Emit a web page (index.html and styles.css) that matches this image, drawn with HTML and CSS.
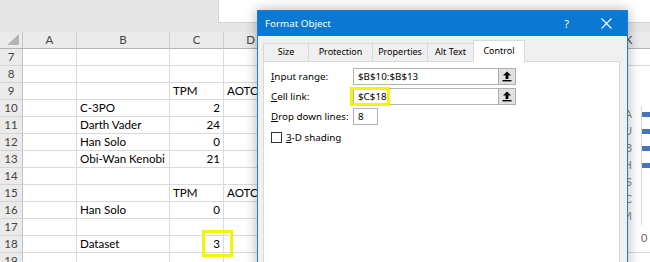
FILE: index.html
```html
<!DOCTYPE html>
<html lang="en">
<head>
    <meta charset="UTF-8">
    <title>Format Object</title>
    <link rel="stylesheet" href="styles.css">
</head>
<body>
    <div class="toolbar">
        <div class="spacer"></div>
        <div class="formula"></div>
    </div>

    <div class="sheet">
        <div class="row heads"><div class="corner"></div><div>A</div><div>B</div><div>C</div><div>D</div><div>E</div><div>F</div><div>G</div><div>H</div><div>I</div><div>J</div><div>K</div></div>
        <div class="row"><div class="rh">7</div><div></div><div></div><div></div><div></div><div></div><div></div><div></div><div></div><div></div><div></div><div></div></div>
        <div class="row"><div class="rh">8</div><div></div><div></div><div></div><div></div><div></div><div></div><div></div><div></div><div></div><div></div><div></div></div>
        <div class="row"><div class="rh">9</div><div></div><div></div><div>TPM</div><div>AOTC</div><div></div><div></div><div></div><div></div><div></div><div></div><div></div></div>
        <div class="row"><div class="rh">10</div><div></div><div>C-3PO</div><div class="num">2</div><div></div><div></div><div></div><div></div><div></div><div></div><div></div><div></div></div>
        <div class="row"><div class="rh">11</div><div></div><div>Darth Vader</div><div class="num">24</div><div></div><div></div><div></div><div></div><div></div><div></div><div></div><div></div></div>
        <div class="row"><div class="rh">12</div><div></div><div>Han Solo</div><div class="num">0</div><div></div><div></div><div></div><div></div><div></div><div></div><div></div><div></div></div>
        <div class="row"><div class="rh">13</div><div></div><div>Obi-Wan Kenobi</div><div class="num">21</div><div></div><div></div><div></div><div></div><div></div><div></div><div></div><div></div></div>
        <div class="row"><div class="rh">14</div><div></div><div></div><div></div><div></div><div></div><div></div><div></div><div></div><div></div><div></div><div></div></div>
        <div class="row"><div class="rh">15</div><div></div><div></div><div>TPM</div><div>AOTC</div><div></div><div></div><div></div><div></div><div></div><div></div><div></div></div>
        <div class="row"><div class="rh">16</div><div></div><div>Han Solo</div><div class="num">0</div><div></div><div></div><div></div><div></div><div></div><div></div><div></div><div></div></div>
        <div class="row"><div class="rh">17</div><div></div><div></div><div></div><div></div><div></div><div></div><div></div><div></div><div></div><div></div><div></div></div>
        <div class="row"><div class="rh">18</div><div></div><div>Dataset</div><div class="num">3</div><div></div><div></div><div></div><div></div><div></div><div></div><div></div><div></div></div>
        <div class="row"><div class="rh">19</div><div></div><div></div><div></div><div></div><div></div><div></div><div></div><div></div><div></div><div></div><div></div></div>

        <!-- highlight round the linked cell -->
        <div class="mark cell-mark"></div>

        <!-- the bar chart sitting on the sheet, mostly behind the dialog -->
        <div class="chart">
            <div class="bars">
                <div class="bar-row"><span class="cat">A</span><span class="bar"></span></div>
                <div class="bar-row"><span class="cat">U</span><span class="bar"></span></div>
                <div class="bar-row"><span class="cat">B</span><span class="bar"></span></div>
                <div class="bar-row"><span class="cat">H</span><span class="bar"></span></div>
                <div class="bar-row"><span class="cat">S</span></div>
                <div class="bar-row"><span class="cat">C</span></div>
                <div class="bar-row"><span class="cat">M</span></div>
            </div>
            <div class="axis-label">0</div>
        </div>
    </div>

    <div class="dialog">
        <div class="titlebar">
            <span class="title">Format Object</span>
            <span class="help">?</span>
            <span class="close">
                <svg width="11" height="11" viewBox="0 0 11 11"><path d="M0.5 0.5 L10.5 10.5 M10.5 0.5 L0.5 10.5" stroke="#fff" stroke-width="1.1" fill="none"/></svg>
            </span>
        </div>
        <div class="dlg-body">
            <div class="tabs">
                <div class="tab" style="width: 46px;">Size</div>
                <div class="tab" style="width: 65px;">Protection</div>
                <div class="tab" style="width: 56px;">Properties</div>
                <div class="tab" style="width: 47px;">Alt Text</div>
                <div class="tab active" style="width: 52px;">Control</div>
            </div>
            <div class="panel">
                <div class="field">
                    <span class="form-label"><u>I</u>nput range:</span>
                    <span class="form-input wide">$B$10:$B$13</span>
                    <span class="pick">
                        <svg width="10" height="11" viewBox="0 0 10 11"><path d="M5 0.5 L1 4.5 H3.6 V8 H6.4 V4.5 H9 Z" fill="#000"/><rect x="0.5" y="9" width="9" height="1.4" fill="#000"/></svg>
                    </span>
                </div>
                <div class="field">
                    <span class="form-label"><u>C</u>ell link:</span>
                    <span class="form-input wide">$C$18</span>
                    <span class="pick">
                        <svg width="10" height="11" viewBox="0 0 10 11"><path d="M5 0.5 L1 4.5 H3.6 V8 H6.4 V4.5 H9 Z" fill="#000"/><rect x="0.5" y="9" width="9" height="1.4" fill="#000"/></svg>
                    </span>
                </div>
                <div class="field">
                    <span class="form-label"><u>D</u>rop down lines:</span>
                    <span class="form-input short">8</span>
                </div>
                <div class="check">
                    <span class="box"></span>
                    <span><u>3</u>-D shading</span>
                </div>
                <div class="mark link-mark"></div>
            </div>
        </div>
    </div>
</body>
</html>
```

FILE: styles.css
```css
* {
    box-sizing: border-box;
}
body {
    margin: 0;
    width: 650px;
    height: 262px;
    overflow: hidden;
    position: relative;
    background-color: #e6e6e6;
    font-family: Lato, "Liberation Sans", sans-serif;
    color: #000;
}

/* --- Excel window --- */
.toolbar {
    display: flex;
    height: 32px;
}
.toolbar .spacer { width: 218px; }
.formula {
    flex: 1;
    height: 23px;
    background-color: #fff;
    border-left: 1px solid #d4d4d4;
    border-bottom: 1px solid #d4d4d4;
}
.sheet {
    position: relative;
    background-color: #fff;
}
.row {
    display: grid;
    grid-template-columns: 23px 54px 93px 54px repeat(8, 54px);
    height: 17px;
}
.row > div {
    border-right: 1px solid #dadada;
    border-bottom: 1px solid #dadada;
    padding: 0 3px;
    font-size: 11.6px;
    line-height: 16px;
    white-space: nowrap;
    overflow: hidden;
}
.row .rh {
    background-color: #ebebeb;
    color: #444;
    text-align: center;
    padding: 0;
    font-size: 11.5px;
    border-right-color: #c4c4c4;
    border-bottom-color: #d4d4d4;
}
.heads > div {
    background-color: #ebebeb;
    color: #444;
    text-align: center;
    font-size: 11.5px;
    border-right-color: #d0d0d0;
    border-bottom-color: #b4b4b4;
}
.heads .corner {
    position: relative;
    border-right-color: #c4c4c4;
}
.heads .corner::after {
    content: "";
    position: absolute;
    right: 3px;
    bottom: 3px;
    border-style: solid;
    border-width: 0 0 11px 12px;
    border-color: transparent transparent #b5b5b5 transparent;
}
.num { text-align: right; }

.mark {
    position: absolute;
    border: 3px solid #f5f500;
}
.cell-mark {
    left: 202px;
    top: 198px;
    width: 31px;
    height: 27px;
}

.chart {
    position: absolute;
    left: 600px;
    top: 34px;
    width: 60px;
    height: 186px;
    background-color: #fff;
    padding-top: 40px;
}
.bars {
    margin-left: 41px;
    border-left: 1px solid #d9d9d9;
}
.bar-row {
    position: relative;
    height: 17px;
}
.cat {
    position: absolute;
    right: 100%;
    margin-right: 10px;
    top: 1px;
    font-size: 11px;
    color: #8a8a8a;
}
.bar {
    position: absolute;
    left: 0;
    top: 6px;
    width: 30px;
    height: 5px;
    background-color: #4472c4;
}
.axis-label {
    margin: 6px 0 0 41px;
    font-size: 11px;
    color: #666;
}

/* --- Format Object dialog --- */
.dialog {
    position: absolute;
    left: 257px;
    top: 10px;
    width: 371px;
    height: 262px;
    background-color: #f0f0f0;
    border: 1px solid #1a7fd6;
    box-shadow: 0 0 12px rgba(0, 0, 0, 0.3);
    font-family: "Noto Sans", "Open Sans", sans-serif;
    font-size: 9.8px;
}
.titlebar {
    display: flex;
    align-items: center;
    height: 25px;
    background-color: #0b78d4;
    color: #fff;
    padding-left: 7px;
}
.title {
    flex: 1;
    font-size: 9.8px;
}
.help {
    font-size: 11px;
    margin-right: 32px;
}
.close {
    display: flex;
    margin-right: 15px;
}
.dlg-body {
    padding: 4px 7px 0 5px;
}
.tabs {
    display: flex;
    align-items: flex-end;
    height: 21px;
}
.tab {
    height: 18px;
    line-height: 16px;
    text-align: center;
    font-size: 9px;
    border: 1px solid #d9d9d9;
    border-bottom: none;
    margin-left: -1px;
}
.tab:first-child { margin-left: 0; }
.tab.active {
    position: relative;
    z-index: 1;
    height: 22px;
    margin-bottom: -1px;
    line-height: 20px;
    background-color: #fff;
}
.panel {
    position: relative;
    height: 220px;
    background-color: #fff;
    border: 1px solid #d9d9d9;
    padding: 6px 0 0 7px;
}
.field {
    display: flex;
    align-items: center;
    height: 17px;
    margin-bottom: 3px;
}
.form-label {
    width: 82px;
}
.form-input {
    height: 17px;
    line-height: 15px;
    padding: 0 4px;
    border: 1px solid #b4b4b4;
}
.form-input.wide { width: 146px; }
.form-input.short { width: 25px; }
.pick {
    display: flex;
    align-items: center;
    justify-content: center;
    width: 18px;
    height: 17px;
    margin-left: -1px;
    background-color: #e1e1e1;
    border: 1px solid #adadad;
}
.check {
    display: flex;
    align-items: center;
    gap: 4px;
    margin-top: 6px;
}
.check .box {
    width: 11px;
    height: 11px;
    background-color: #fff;
    border: 1px solid #333;
}
.link-mark {
    left: 86px;
    top: 25px;
    width: 40px;
    height: 19px;
}
```
